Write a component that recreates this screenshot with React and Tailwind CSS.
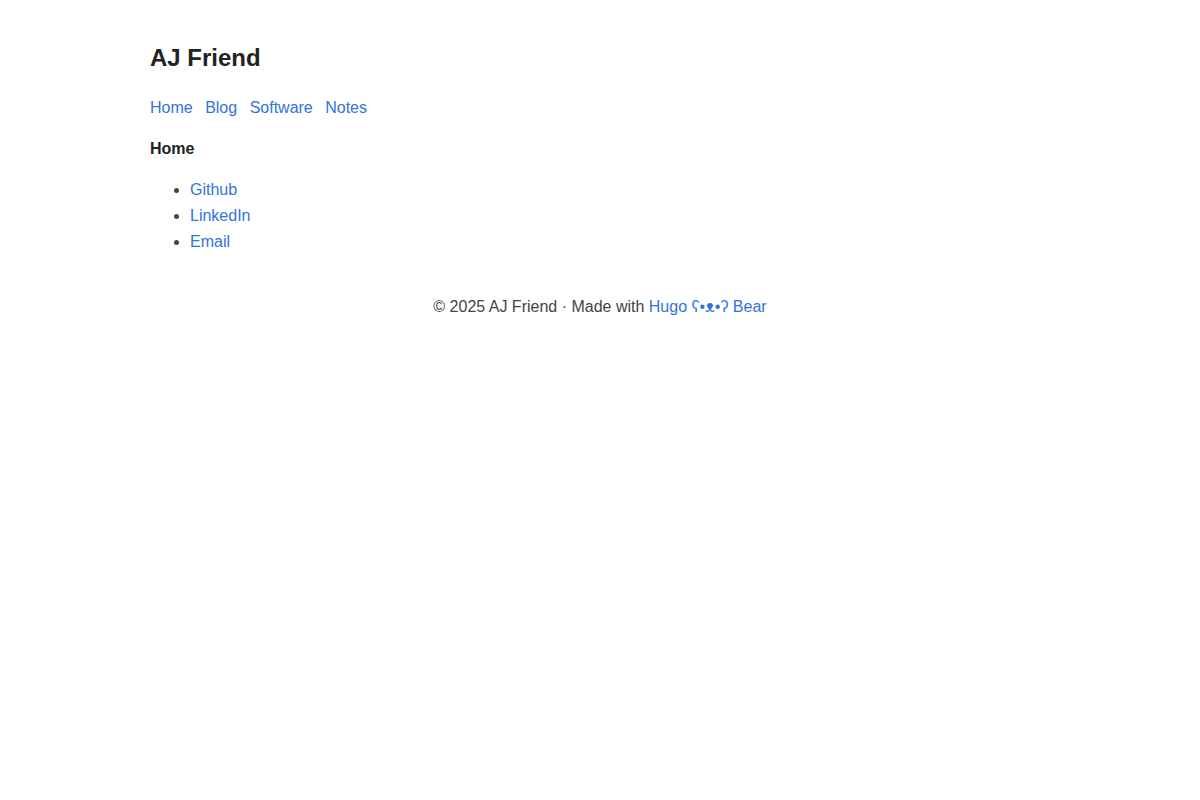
export default function App() {
  const nav = ["Home", "Blog", "Software", "Notes"];
  const links = ["Github", "LinkedIn", "Email"];

  return (
    <div className="min-h-[800px] bg-white text-[#444] text-[16px] leading-[26px] font-['Liberation_Sans',Arial,sans-serif]">
      <div className="max-w-[900px] mx-auto pt-[39px]">
        {/* header */}
        <header>
          <a href="#" className="no-underline">
            <h2 className="text-[24px] leading-[38px] font-bold text-[#222]">AJ Friend</h2>
          </a>
          <nav className="mt-[18px]">
            {nav.map((n) => (
              <a key={n} href="#" className="text-[#3273dc] mr-[8px]">
                {n}{" "}
              </a>
            ))}
          </nav>
        </header>

        {/* main */}
        <main className="mt-[15px]">
          <p className="font-bold text-[#222]">Home</p>
          <ul className="list-disc pl-[40px] mt-[15px]">
            {links.map((l) => (
              <li key={l}>
                <a href="#" className="text-[#3273dc]">{l}</a>
              </li>
            ))}
          </ul>
        </main>

        {/* footer */}
        <footer className="mt-[39px] text-center">
          © 2025 AJ Friend · Made with{" "}
          <a href="#" className="text-[#3273dc]">Hugo ʕ•ᴥ•ʔ Bear</a>
        </footer>
      </div>
    </div>
  );
}
